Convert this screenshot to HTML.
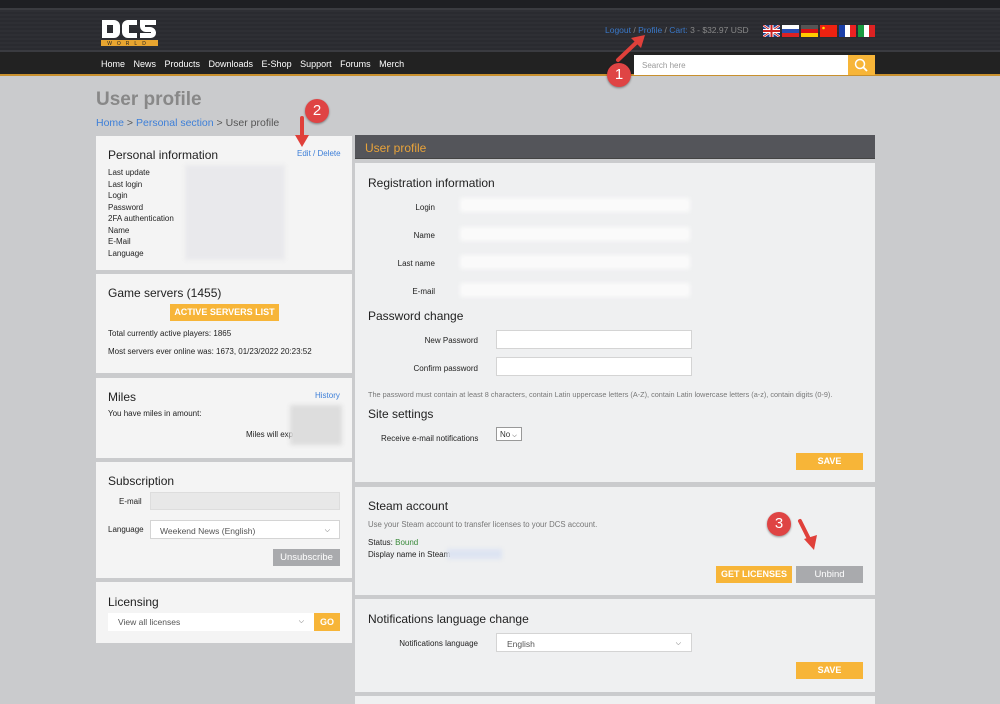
<!DOCTYPE html>
<html><head><meta charset="utf-8"><style>
*{margin:0;padding:0;box-sizing:border-box}
body{width:1000px;height:704px;overflow:hidden;background:#cacbcd;font-family:"Liberation Sans",sans-serif;position:relative;color:#333}
.a{position:absolute;white-space:nowrap}
.p{position:absolute;background:#f4f4f4}
.pr{position:absolute;background:#eff0f1}
.h{font-size:12px;color:#222}
.s{font-size:8px;color:#222}
.lk{color:#3d7fd8}
.blur{position:absolute;background:#e6e6ea;filter:blur(2px)}
.inp{position:absolute;background:#fff;border:1px solid #d4d4d4;white-space:nowrap}
.btn{position:absolute;background:#f7b538;color:#fff;font-size:9px;font-weight:bold;text-align:center}
.fl{position:absolute;top:25px;width:17px;height:12px}
.c{position:absolute;width:24px;height:24px;border-radius:50%;background:#df4444;color:#fff;font-size:15px;text-align:center;line-height:24px;box-shadow:0 1px 2px rgba(0,0,0,.4)}
.ch{float:right;font-size:7px;margin-top:1px}
</style></head><body>
<div class="a" style="left:0;top:0;width:1000px;height:8px;background:#1e1f23"></div>
<div class="a" style="left:0;top:8px;width:1000px;height:44px;background:repeating-linear-gradient(#2e2f34 0 2px,#2a2b30 2px 4px);border-top:2px solid #3a3b40;border-bottom:2px solid #3a3b40"></div>
<div class="a" style="left:0;top:52px;width:1000px;height:24px;background:#222;border-bottom:2px solid #c8902e"></div>
<svg class="a" style="left:101px;top:19px" width="57" height="27" viewBox="0 0 57 27">
<path d="M1 1h12a6 6 0 0 1 6 6v6a6 6 0 0 1-6 6H1z M6 6v8h6v-8z" fill="#fff" fill-rule="evenodd"/>
<path d="M21 7a6 6 0 0 1 6-6h9v5h-8v8h8v5h-9a6 6 0 0 1-6-6z" fill="#fff"/>
<path d="M39 1h16v5h-11v2h5a6 6 0 0 1 6 6v0a5 5 0 0 1-5 5h-11v-5h11v-1h-5a6 6 0 0 1-6-6z" fill="#fff"/>
<rect x="0" y="21" width="57" height="6" fill="#e8a530"/>
<text x="28" y="26" font-size="5" fill="#222" text-anchor="middle" letter-spacing="5" font-family="Liberation Sans">WORLD</text>
</svg>
<div class="a" style="left:605px;top:25px;font-size:8.5px;color:#888"><span style="color:#3a78c8">Logout</span> / <span style="color:#3a78c8">Profile</span> / <span style="color:#3a78c8">Cart:</span> 3 - $32.97 USD</div>
<svg class="fl" style="left:763px" viewBox="0 0 17 12"><rect width="17" height="12" fill="#1d3f8f"/><path d="M0 0L17 12M17 0L0 12" stroke="#fff" stroke-width="2.5"/><path d="M0 0L17 12M17 0L0 12" stroke="#c22" stroke-width="1"/><path d="M8.5 0v12M0 6h17" stroke="#fff" stroke-width="4"/><path d="M8.5 0v12M0 6h17" stroke="#c22" stroke-width="2"/></svg>
<svg class="fl" style="left:782px" viewBox="0 0 17 12"><rect width="17" height="4" fill="#fff"/><rect y="4" width="17" height="4" fill="#2a4fb0"/><rect y="8" width="17" height="4" fill="#d22"/></svg>
<svg class="fl" style="left:801px" viewBox="0 0 17 12"><rect width="17" height="4" fill="#555"/><rect y="4" width="17" height="4" fill="#d11"/><rect y="8" width="17" height="4" fill="#fc0"/></svg>
<svg class="fl" style="left:820px" viewBox="0 0 17 12"><rect width="17" height="12" fill="#e21"/><circle cx="3.5" cy="3" r="1.3" fill="#fd0"/></svg>
<svg class="fl" style="left:839px" viewBox="0 0 17 12"><rect width="6" height="12" fill="#1a3ea8"/><rect x="6" width="5" height="12" fill="#fff"/><rect x="11" width="6" height="12" fill="#e22"/></svg>
<svg class="fl" style="left:858px" viewBox="0 0 17 12"><rect width="6" height="12" fill="#1a9a40"/><rect x="6" width="5" height="12" fill="#fff"/><rect x="11" width="6" height="12" fill="#d22"/></svg>
<div class="a" style="left:101px;top:59px;font-size:9px;color:#fff;word-spacing:6px">Home News Products Downloads E-Shop Support Forums Merch</div>
<div class="a" style="left:634px;top:55px;width:214px;height:20px;background:#fff;font-size:8px;color:#999;padding:6px 8px">Search here</div>
<div class="a" style="left:848px;top:55px;width:27px;height:20px;background:#f7b538"><svg width="27" height="20"><circle cx="12" cy="9" r="4.5" fill="none" stroke="#fff" stroke-width="1.5"/><path d="M15 12l4 4" stroke="#fff" stroke-width="1.8"/></svg></div>

<div class="a" style="left:96px;top:89px;font-size:19px;color:#888;font-weight:bold">User profile</div>
<div class="a" style="left:96px;top:117px;font-size:10.5px;color:#555"><span style="color:#3d7fd8">Home</span> &gt; <span style="color:#3d7fd8">Personal section</span> &gt; User profile</div>

<div class="p" style="left:96px;top:136px;width:256px;height:134px"></div>
<div class="a h" style="left:108px;top:148px">Personal information</div>
<div class="a" style="left:297px;top:149px;font-size:8px;color:#3d7fd8">Edit / Delete</div>
<div class="a s" style="left:108px;top:167px;line-height:11.5px">Last update<br>Last login<br>Login<br>Password<br>2FA authentication<br>Name<br>E-Mail<br>Language</div>
<div class="blur" style="left:185px;top:165px;width:100px;height:95px;background:#e9e9ec"></div>

<div class="p" style="left:96px;top:274px;width:256px;height:99px"></div>
<div class="a h" style="left:108px;top:286px">Game servers (1455)</div>
<div class="btn" style="left:170px;top:304px;width:109px;height:17px;line-height:17px">ACTIVE SERVERS LIST</div>
<div class="a s" style="left:108px;top:329px">Total currently active players: 1865</div>
<div class="a s" style="left:108px;top:347px">Most servers ever online was: 1673, 01/23/2022 20:23:52</div>

<div class="p" style="left:96px;top:378px;width:256px;height:80px"></div>
<div class="a h" style="left:108px;top:390px">Miles</div>
<div class="a" style="left:315px;top:391px;font-size:8px;color:#3d7fd8">History</div>
<div class="a s" style="left:108px;top:409px">You have miles in amount:</div>
<div class="a s" style="left:246px;top:430px">Miles will exp</div>
<div class="blur" style="left:290px;top:405px;width:52px;height:40px;background:#ddd"></div>

<div class="p" style="left:96px;top:462px;width:256px;height:116px"></div>
<div class="a h" style="left:108px;top:474px">Subscription</div>
<div class="a s" style="left:119px;top:497px">E-mail</div>
<div class="a" style="left:150px;top:492px;width:190px;height:18px;background:#e8e8e8;border:1px solid #ddd"></div>
<div class="a s" style="left:108px;top:525px">Language</div>
<div class="inp" style="left:150px;top:520px;width:190px;height:19px;font-size:8.5px;color:#555;padding:5px 9px">Weekend News (English)<span class="ch">&#9013;</span></div>
<div class="a" style="left:273px;top:549px;width:67px;height:17px;background:#a9aaad;color:#fff;font-size:9.5px;text-align:center;line-height:17px">Unsubscribe</div>

<div class="p" style="left:96px;top:582px;width:256px;height:61px"></div>
<div class="a h" style="left:108px;top:595px">Licensing</div>
<div class="inp" style="left:108px;top:613px;width:206px;height:18px;font-size:8.5px;color:#555;padding:4px 10px;border:none">View all licenses<span class="ch">&#9013;</span></div>
<div class="btn" style="left:314px;top:613px;width:26px;height:18px;line-height:18px">GO</div>

<div class="a" style="left:355px;top:135px;width:520px;height:24px;background:#54555a;border-bottom:1px solid #444"></div>
<div class="a" style="left:365px;top:141px;font-size:12px;color:#e8a33a">User profile</div>

<div class="pr" style="left:355px;top:163px;width:520px;height:319px"></div>
<div class="a h" style="left:368px;top:176px">Registration information</div>
<div class="a s" style="left:355px;top:203px;width:80px;text-align:right">Login</div>
<div class="a s" style="left:355px;top:231px;width:80px;text-align:right">Name</div>
<div class="a s" style="left:355px;top:259px;width:80px;text-align:right">Last name</div>
<div class="a s" style="left:355px;top:287px;width:80px;text-align:right">E-mail</div>
<div class="blur" style="left:460px;top:198px;width:230px;height:14px;background:#fafafa"></div>
<div class="blur" style="left:460px;top:227px;width:230px;height:14px;background:#fafafa"></div>
<div class="blur" style="left:460px;top:255px;width:230px;height:14px;background:#fafafa"></div>
<div class="blur" style="left:460px;top:283px;width:230px;height:14px;background:#fafafa"></div>
<div class="a h" style="left:368px;top:309px">Password change</div>
<div class="a s" style="left:355px;top:336px;width:123px;text-align:right">New Password</div>
<div class="inp" style="left:496px;top:330px;width:196px;height:19px"></div>
<div class="a s" style="left:355px;top:364px;width:123px;text-align:right">Confirm password</div>
<div class="inp" style="left:496px;top:357px;width:196px;height:19px"></div>
<div class="a" style="left:368px;top:390px;font-size:7.3px;color:#777">The password must contain at least 8 characters, contain Latin uppercase letters (A-Z), contain Latin lowercase letters (a-z), contain digits (0-9).</div>
<div class="a h" style="left:368px;top:407px">Site settings</div>
<div class="a s" style="left:381px;top:434px">Receive e-mail notifications</div>
<div class="inp" style="left:496px;top:427px;width:26px;height:14px;font-size:8px;padding:2px 3px;border-color:#999">No<span style="font-size:6px;margin-left:2px">&#9013;</span></div>
<div class="btn" style="left:796px;top:453px;width:67px;height:17px;line-height:17px">SAVE</div>

<div class="pr" style="left:355px;top:487px;width:520px;height:108px"></div>
<div class="a h" style="left:368px;top:499px">Steam account</div>
<div class="a" style="left:368px;top:520px;font-size:7.8px;color:#777">Use your Steam account to transfer licenses to your DCS account.</div>
<div class="a s" style="left:368px;top:538px">Status: <span style="color:#3a8a3a">Bound</span></div>
<div class="a s" style="left:368px;top:550px">Display name in Steam</div>
<div class="blur" style="left:447px;top:549px;width:55px;height:10px;background:#dde4f2"></div>
<div class="btn" style="left:716px;top:566px;width:76px;height:17px;line-height:17px">GET LICENSES</div>
<div class="a" style="left:796px;top:566px;width:67px;height:17px;background:#a9aaad;color:#fff;font-size:9.5px;text-align:center;line-height:17px">Unbind</div>

<div class="pr" style="left:355px;top:599px;width:520px;height:93px"></div>
<div class="a h" style="left:368px;top:612px">Notifications language change</div>
<div class="a s" style="left:355px;top:639px;width:123px;text-align:right">Notifications language</div>
<div class="inp" style="left:496px;top:633px;width:196px;height:19px;font-size:8.5px;color:#555;padding:5px 10px">English<span class="ch">&#9013;</span></div>
<div class="btn" style="left:796px;top:662px;width:67px;height:17px;line-height:17px">SAVE</div>
<div class="pr" style="left:355px;top:696px;width:520px;height:8px"></div>

<svg class="a" style="left:0;top:0" width="1000" height="704">
<path d="M618 60L638 41" stroke="#e0403a" stroke-width="4" stroke-linecap="round"/><path d="M645 35L631 38L641 48z" fill="#e0403a"/>
<path d="M302 118L302 138" stroke="#e0403a" stroke-width="4" stroke-linecap="round"/><path d="M302 147L295 135L309 135z" fill="#e0403a"/>
<path d="M800 521L810 541" stroke="#e0403a" stroke-width="4" stroke-linecap="round"/><path d="M814 550L804 539L817 535z" fill="#e0403a"/>
</svg>
<div class="c" style="left:607px;top:63px">1</div>
<div class="c" style="left:305px;top:99px">2</div>
<div class="c" style="left:767px;top:512px">3</div>
</body></html>
